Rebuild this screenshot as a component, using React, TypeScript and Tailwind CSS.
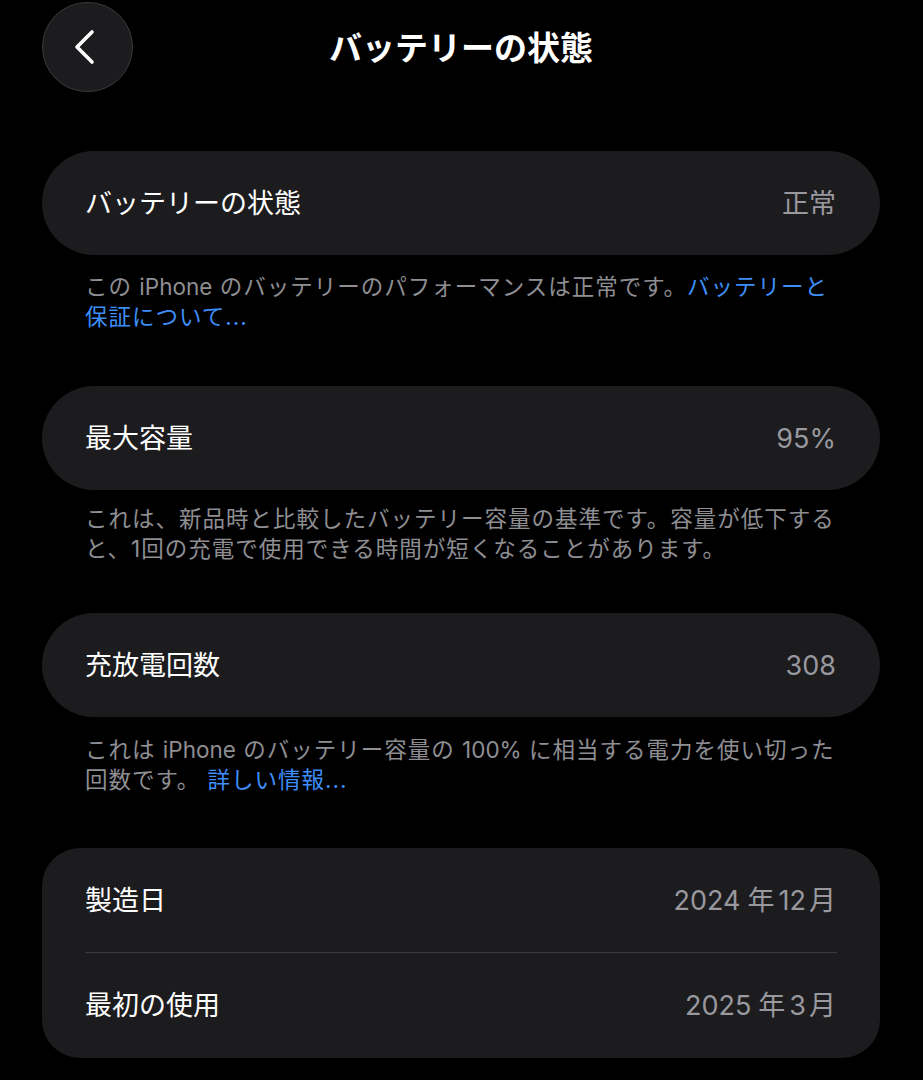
import React from "react";

const font = "font-['Inter','Noto_Sans_CJK_JP',sans-serif]";

function Row({ label, value }: { label: string; value: React.ReactNode }) {
  return (
    <div className="flex h-[104px] items-center justify-between rounded-full bg-[#1c1c1e] pl-[43px] pr-[44px]">
      <span className="text-[27px] leading-none text-white">{label}</span>
      <span className="text-[27px] leading-none text-[#98989e]">{value}</span>
    </div>
  );
}

function Desc({ children, className = "" }: { children: React.ReactNode; className?: string }) {
  return (
    <p className={`pl-[43px] pr-[10px] text-[22.5px] leading-[30px] tracking-[1px] text-[#8e8e93] whitespace-nowrap ${className}`}>
      {children}
    </p>
  );
}

export default function App() {
  return (
    <div className={`min-h-[1080px] w-full bg-black ${font}`}>
      <div className="pl-[42px] pr-[43px]">
        {/* Header */}
        <div className="relative flex h-[94px] items-center justify-center pt-[2px]">
          <button className="absolute left-0 top-[2px] flex h-[90px] w-[91px] items-center justify-center rounded-full border border-[#3a3a3c] bg-[#1c1c1e]">
            <svg width="30" height="40" viewBox="0 0 30 40" className="-ml-[4px]">
              <path d="M21 5 L6 20 L21 35" fill="none" stroke="white" strokeWidth="3.6" strokeLinecap="round" strokeLinejoin="round" />
            </svg>
          </button>
          <h1 className="text-[33px] font-bold leading-none text-white">バッテリーの状態</h1>
        </div>

        <div className="mt-[57px]">
          <Row label="バッテリーの状態" value="正常" />
          <Desc className="mt-[17px] mb-[54px]">
            この <span className="tracking-normal">iPhone</span> のバッテリーのパフォーマンスは正常です。<span className="text-[#3d8ef7]">バッテリーと</span>
            <br />
            <span className="text-[#3d8ef7]">保証について...</span>
          </Desc>

          <Row label="最大容量" value="95%" />
          <Desc className="mt-[14px] mb-[49px]">
            これは、新品時と比較したバッテリー容量の基準です。容量が低下する
            <br />
            と、1回の充電で使用できる時間が短くなることがあります。
          </Desc>

          <Row label="充放電回数" value="308" />
          <Desc className="mt-[18px] mb-[53px]">
            これは <span className="tracking-normal">iPhone</span> のバッテリー容量の <span className="tracking-normal">100%</span> に相当する電力を使い切った
            <br />
            回数です。 <span className="text-[#3d8ef7]">詳しい情報...</span>
          </Desc>

          <div className="rounded-[38px] bg-[#1c1c1e]">
            <div className="flex h-[104px] items-center justify-between pl-[43px] pr-[44px]">
              <span className="text-[27px] leading-none text-white">製造日</span>
              <span className="text-[27px] leading-none text-[#98989e]">
                2024<span className="ml-[7px] mr-[4px]">年</span>12<span className="ml-[3px]">月</span>
              </span>
            </div>
            <div className="mx-[43px] h-px bg-[#3a3a3c]" />
            <div className="flex h-[105px] items-center justify-between pl-[43px] pr-[44px]">
              <span className="text-[27px] leading-none text-white">最初の使用</span>
              <span className="text-[27px] leading-none text-[#98989e]">
                2025<span className="ml-[7px] mr-[4px]">年</span>3<span className="ml-[3px]">月</span>
              </span>
            </div>
          </div>
        </div>
      </div>
    </div>
  );
}
